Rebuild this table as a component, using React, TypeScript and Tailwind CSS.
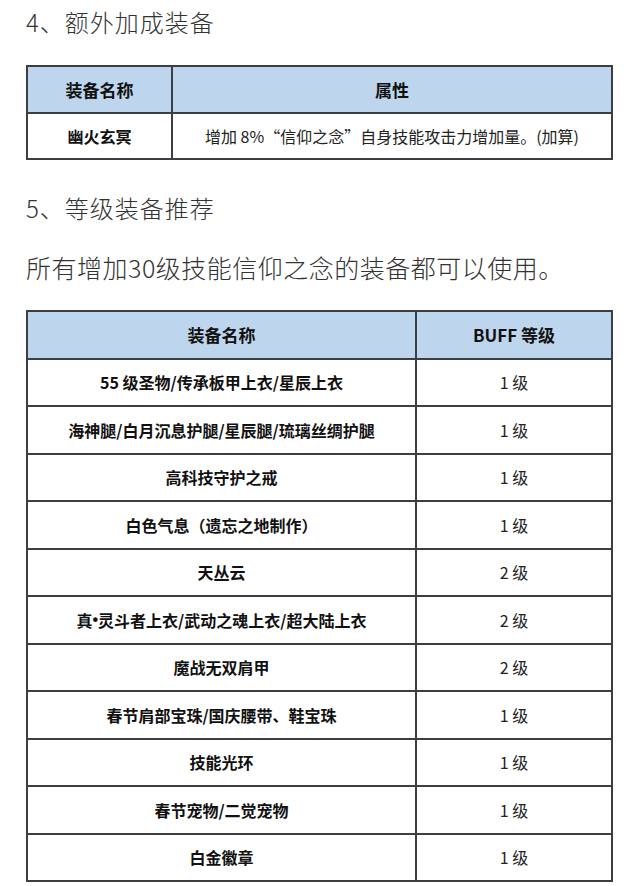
const cjk = "font-['Noto_Sans_CJK_SC','Noto_Sans',sans-serif]";

const rows: [React.ReactNode, string][] = [
  ["55 级圣物/传承板甲上衣/星辰上衣", "1 级"],
  ["海神腿/白月沉息护腿/星辰腿/琉璃丝绸护腿", "1 级"],
  ["高科技守护之戒", "1 级"],
  ["白色气息（遗忘之地制作）", "1 级"],
  ["天丛云", "2 级"],
  [
    <>
      真<span className="font-['Liberation_Sans',sans-serif]">•</span>灵斗者上衣/武动之魂上衣/超大陆上衣
    </>,
    "2 级",
  ],
  ["魔战无双肩甲", "2 级"],
  ["春节肩部宝珠/国庆腰带、鞋宝珠", "1 级"],
  ["技能光环", "1 级"],
  ["春节宠物/二觉宠物", "1 级"],
  ["白金徽章", "1 级"],
];

export default function App() {
  return (
    <div className={`w-[640px] h-[886px] bg-white pl-[26px] ${cjk} overflow-hidden`}>
      {/* section 4 */}
      <div className="h-[44px] flex items-center text-[24px] tracking-[1px] font-light text-[#333]">
        4、额外加成装备
      </div>

      <div className="mt-[21px] w-[587px] h-[95px] bg-[#3b3f44] p-[2px] grid grid-cols-[143px_1fr] grid-rows-2 gap-[2px]">
        <div className="bg-[#bdd6ed] flex items-center justify-center text-[17px] font-bold text-[#111]">装备名称</div>
        <div className="bg-[#bdd6ed] flex items-center justify-center text-[17px] font-bold text-[#111]">属性</div>
        <div className="bg-white flex items-center justify-center text-[16px] font-bold text-[#111]">幽火玄冥</div>
        <div className="bg-white flex items-center justify-center text-[16px] text-[#222]">
          增加 8%“信仰之念”自身技能攻击力增加量。(加算)
        </div>
      </div>

      {/* section 5 */}
      <div className="mt-[24px] h-[48px] flex items-center text-[24px] tracking-[1px] font-light text-[#333]">
        5、等级装备推荐
      </div>
      <div className="mt-[12px] h-[48px] flex items-center text-[25px] tracking-[0.5px] font-light text-[#333]">
        所有增加30级技能信仰之念的装备都可以使用。
      </div>

      <div className="mt-[18px] w-[587px] h-[572px] bg-[#3b3f44] p-[2px] grid grid-cols-[387px_1fr] grid-rows-[repeat(12,1fr)] gap-[2px]">
        <div className="bg-[#bdd6ed] flex items-center justify-center text-[17px] font-bold text-[#111]">装备名称</div>
        <div className="bg-[#bdd6ed] flex items-center justify-center text-[17px] font-bold text-[#111]">BUFF 等级</div>
        {rows.map(([name, lv], i) => (
          <div key={i} className="contents">
            <div className="bg-white flex items-center justify-center text-[16px] font-bold text-[#111]">
              {name}
            </div>
            <div className="bg-white flex items-center justify-center text-[16px] text-[#222]">
              {lv}
            </div>
          </div>
        ))}
      </div>
    </div>
  );
}
